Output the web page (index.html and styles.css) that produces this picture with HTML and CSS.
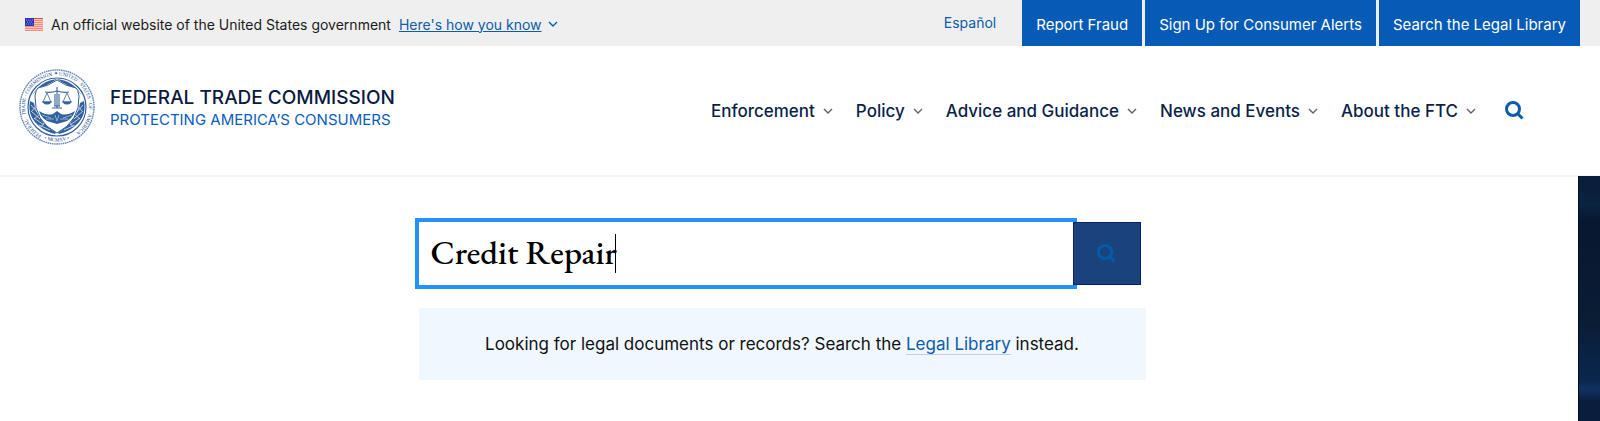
FILE: index.html
```html
<!DOCTYPE html>
<html lang="en">

<head>
    <meta charset="UTF-8">
    <meta name="viewport" content="width=device-width, initial-scale=1.0">
    <title>Search | Federal Trade Commission</title>
    <link rel="stylesheet" href="styles.css">
</head>

<body>
    <div class="topbar">
        <div class="banner">
            <svg class="flag" viewBox="0 0 18 13" aria-hidden="true">
                <rect width="18" height="13" fill="#f6c4bc"/>
                <path d="M0 .5h18M0 2.5h18M0 4.5h18M0 6.5h18M0 8.5h18M0 10.5h18M0 12.5h18" stroke="#ee8f80"/>
                <path d="M9 .5h9" stroke="#e0502c"/>
                <rect width="9" height="8" fill="#2a35b4"/>
                <path d="M1 2h7M2 4h6M1 6h7" stroke="#8f97dc" stroke-dasharray="1 1"/>
            </svg>
            <span>An official website of the United States government</span>
            <button type="button" class="banner-toggle">
                <span>Here's how you know</span>
                <svg class="chevron" viewBox="0 0 10 6" aria-hidden="true"><path d="M1 1l4 4 4-4"/></svg>
            </button>
        </div>
        <div class="quick-links">
            <a class="language" href="#">Español</a>
            <a class="quick" href="#">Report Fraud</a>
            <a class="quick" href="#">Sign Up for Consumer Alerts</a>
            <a class="quick" href="#">Search the Legal Library</a>
        </div>
    </div>

    <header class="header">
        <a class="brand" href="#">
            <svg class="seal" viewBox="0 0 76 76" aria-hidden="true">
                <defs>
                    <path id="ring" d="M27 68.4A32 32 0 1 1 49 68.4"/>
                    <path id="ring-bottom" d="M20 67.4A34.5 34.5 0 0 0 56 67.4"/>
                </defs>
                <circle cx="38" cy="38" r="37" fill="#fff" stroke="#5f86b8" stroke-width="1.4" stroke-dasharray="1.6 .6"/>
                <circle cx="38" cy="38" r="29" fill="#fff" stroke="#33619d" stroke-width="1.2"/>
                <text class="seal-text"><textPath href="#ring" startOffset="5">FEDERAL · TRADE · COMMISSION ✦ UNITED · STATES · OF · AMERICA</textPath><textPath href="#ring-bottom" startOffset="6">• MCMXV •</textPath></text>
                <path d="M13 27q8-15 25-17 17 2 25 17l-6-8q-9-2-19-9-10 7-19 9z" fill="#33619d"/>
                <path d="M11 32q-3 15 9 25 7 6 16 8l2-3Q18 53 15 34zM65 32q3 15-9 25-7 6-16 8l-2-3q20-9 23-28z" fill="#33619d"/>
                <g fill="none" stroke="#c9d7e8" stroke-width=".9">
                    <path d="M12 36l6 7M12 42l9 8M15 49l10 7M20 56l11 5M17 37l-4 5M20 46l-5 4M26 53l-5 6"/>
                    <path d="M64 36l-6 7M64 42l-9 8M61 49l-10 7M56 56l-11 5M59 37l4 5M56 46l5 4M50 53l5 6"/>
                </g>
                <path d="M38 11q8 6 19 8 2 1 3 8 1 25-22 37-23-12-22-37 1-7 3-8 11-2 19-8z" fill="#fff" stroke="#33619d"/>
                <path d="M20 42q8 5 14 3l4-3 4 3q6 2 14-3-3 9-11 11-4 1-7 2-3-1-7-2-8-2-11-11z" fill="#33619d"/>
                <path d="M23 46l9 3M27 50l8 0M53 46l-9 3M49 50l-8 0M36 46l2 6 2-6" fill="none" stroke="#a9c0da" stroke-width=".8"/>
                <g fill="none" stroke="#33619d" stroke-width="1.1">
                    <path d="M26 23q6 1 12-1 6 2 12 1M38 18v21M36 37V25M40 37V25M33 39h10M35 37h6"/>
                    <path d="M28 24l-4 9h8zM48 24l-4 9h8z" stroke-width=".8"/>
                    <path d="M24 33q4 4 8 0zM44 33q4 4 8 0z" fill="#33619d"/>
                </g>
            </svg>
            <span class="brand-text">
                <span class="brand-name">FEDERAL TRADE COMMISSION</span>
                <span class="brand-tagline">PROTECTING AMERICA’S CONSUMERS</span>
            </span>
        </a>
        <nav class="nav">
            <button type="button" class="nav-item">Enforcement <svg class="chevron" viewBox="0 0 10 6" aria-hidden="true"><path d="M1 1l4 4 4-4"/></svg></button>
            <button type="button" class="nav-item">Policy <svg class="chevron" viewBox="0 0 10 6" aria-hidden="true"><path d="M1 1l4 4 4-4"/></svg></button>
            <button type="button" class="nav-item">Advice and Guidance <svg class="chevron" viewBox="0 0 10 6" aria-hidden="true"><path d="M1 1l4 4 4-4"/></svg></button>
            <button type="button" class="nav-item">News and Events <svg class="chevron" viewBox="0 0 10 6" aria-hidden="true"><path d="M1 1l4 4 4-4"/></svg></button>
            <button type="button" class="nav-item">About the FTC <svg class="chevron" viewBox="0 0 10 6" aria-hidden="true"><path d="M1 1l4 4 4-4"/></svg></button>
            <button type="button" class="nav-search" aria-label="Search">
                <svg class="magnifier" viewBox="0 0 19 19" aria-hidden="true"><circle cx="8" cy="8" r="6.5"/><path d="M12.5 12.5l5 5"/></svg>
            </button>
        </nav>
    </header>

    <div class="page">
        <main class="content">
            <form class="search" role="search">
                <div class="search-field">
                    <input class="search-input" type="text" value="Credit Repair" aria-label="Search terms">
                    <span class="caret"></span>
                </div>
                <button type="submit" class="search-button" aria-label="Search">
                    <svg class="magnifier" viewBox="0 0 19 19" aria-hidden="true"><circle cx="8" cy="8" r="6.5"/><path d="M12.5 12.5l5 5"/></svg>
                </button>
            </form>
            <p class="notice">Looking for legal documents or records? Search the <a href="#">Legal Library</a> instead.</p>
        </main>
        <div class="side-image"></div>
    </div>
</body>

</html>
```
FILE: styles.css
```css
* {
    box-sizing: border-box;
}

body {
    margin: 0;
    min-height: 100vh;
    display: flex;
    flex-direction: column;
    font-family: Inter, "Liberation Sans", sans-serif;
    color: #1b1b1b;
    background-color: #fff;
}

button {
    padding: 0;
    border: none;
    background: none;
    font-family: inherit;
    cursor: pointer;
}

svg {
    display: block;
    flex: none;
}

.topbar {
    display: flex;
    justify-content: space-between;
    height: 46px;
    padding: 0 20px 0 25px;
    background-color: #efefef;
}

.banner {
    display: flex;
    align-items: center;
    gap: 8px;
    padding-top: 2px;
    font-size: 14px;
}

.flag {
    width: 18px;
    height: 13px;
}

.banner-toggle {
    display: flex;
    align-items: center;
    gap: 6px;
    font-size: 14px;
    color: #0b5cab;
}

.banner-toggle span {
    text-decoration: underline;
}

.chevron {
    width: 10px;
    height: 6px;
    fill: none;
    stroke: currentColor;
    stroke-width: 1.4;
}

.quick-links {
    display: flex;
    gap: 3px;
}

.language {
    padding: 14px 23px 0 0;
    font-size: 14px;
    line-height: 18px;
    color: #0b5cab;
    text-decoration: none;
}

.quick {
    display: flex;
    align-items: center;
    padding: 2px 14px 0;
    font-size: 15px;
    color: #fff;
    background-color: #055bb5;
    text-decoration: none;
}

.header {
    display: flex;
    justify-content: space-between;
    align-items: center;
    height: 131px;
    padding: 0 76px 8px 19px;
    border-bottom: 2px solid #f4f4f4;
}

.brand {
    display: flex;
    align-items: center;
    gap: 15px;
    text-decoration: none;
}

.seal {
    width: 76px;
    height: 76px;
}

.seal-text {
    font-family: "Liberation Serif", serif;
    font-size: 5px;
    fill: #17468a;
}

.brand-text {
    display: flex;
    flex-direction: column;
    padding-top: 4px;
}

.brand-name {
    font-size: 19px;
    font-weight: 500;
    line-height: 22px;
    color: #0a1a40;
}

.brand-tagline {
    font-size: 15px;
    line-height: 22px;
    color: #0b5cbe;
}

.nav {
    display: flex;
    align-items: center;
    gap: 23px;
    padding-top: 8px;
}

.nav-item {
    display: flex;
    align-items: center;
    gap: 8px;
    font-size: 17px;
    font-weight: 500;
    line-height: 24px;
    color: #0c1f4a;
}

.nav-item .chevron {
    color: #5b6270;
}

.nav-search {
    margin-left: 6px;
    color: #0b5cab;
}

.magnifier {
    width: 19px;
    height: 19px;
    fill: none;
    stroke: currentColor;
    stroke-width: 3;
}

.page {
    display: flex;
    flex: 1;
}

.content {
    flex: 1;
    padding: 45px 14px 40px 0;
}

.search,
.notice {
    max-width: 727px;
    margin: 0 auto;
}

.search {
    display: flex;
    padding-right: 5px;
}

.search-field {
    position: relative;
    flex: 1;
}

.search-input {
    display: block;
    width: 100%;
    height: 63px;
    padding: 0 12px 4px;
    border: none;
    border-radius: 0;
    outline: 4px solid #2491ff;
    font-family: "EB Garamond", "Liberation Serif", serif;
    font-size: 34px;
    font-weight: 500;
    color: #000;
}

.caret {
    position: absolute;
    top: 12px;
    left: 196px;
    width: 1px;
    height: 39px;
    background-color: #000;
}

.search-button {
    position: relative;
    display: flex;
    align-items: center;
    justify-content: center;
    width: 68px;
    height: 63px;
    border: 1px solid #06226b;
    background-color: #1a437d;
    color: #0659a6;
}

.notice {
    margin-top: 23px;
    padding: 24px;
    font-size: 17px;
    line-height: 24px;
    text-align: center;
    color: #111;
    background-color: #f0f7fe;
}

.notice a {
    color: #0b5cab;
    text-decoration: none;
    border-bottom: 1px solid #c5cedb;
}

.side-image {
    width: 22px;
    margin-top: -1px;
    border-left: 1px solid #020d26;
    background: linear-gradient(#091d38, #0a2340 12%, #081730 18%, #0a1d35 60%, #0a2347 75%, #0a264b 83%, #103160 87%, #0a1d3d 92%);
}
```
